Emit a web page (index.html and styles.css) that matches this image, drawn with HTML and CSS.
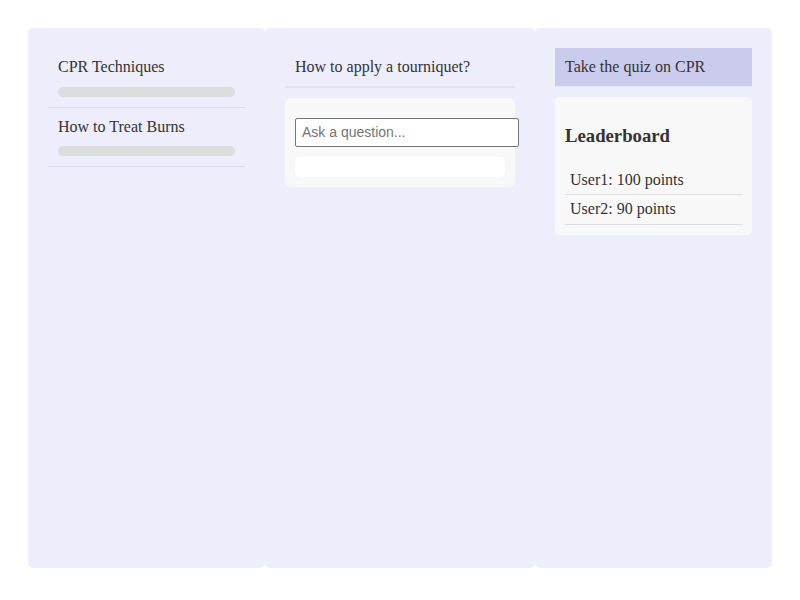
FILE: index.html
```html
<!DOCTYPE html>
<html>
<head>
<meta charset="utf-8">
<link rel="stylesheet" href="styles.css">
</head>
<body>
<div class="layout">
  <aside class="col col-side">
    <div class="topic">
      <div class="topic-title">CPR Techniques</div>
      <div class="bar"></div>
    </div>
    <div class="topic">
      <div class="topic-title">How to Treat Burns</div>
      <div class="bar"></div>
    </div>
  </aside>
  <main class="col col-main">
    <div class="question">How to apply a tourniquet?</div>
    <div class="card">
      <input class="ask" type="text" placeholder="Ask a question...">
      <div class="answers"></div>
    </div>
  </main>
  <aside class="col col-side">
    <div class="quiz">Take the quiz on CPR</div>
    <div class="card">
      <h3 class="lb-title">Leaderboard</h3>
      <div class="lb-row">User1: 100 points</div>
      <div class="lb-row">User2: 90 points</div>
    </div>
  </aside>
</div>
</body>
</html>
```

FILE: styles.css
```css
html, body {
  margin: 0;
  padding: 0;
  background: #ffffff;
}
body {
  font-family: "Liberation Serif", "Times New Roman", serif;
  font-size: 16px;
  color: #333333;
}
.layout {
  display: grid;
  grid-template-columns: 237px 270px 237px;
  padding: 28px;
  height: 540px;
}
.col {
  background: #eeedfc;
  border-radius: 5px;
  padding: 20px;
}
.topic {
  padding: 10px;
  border-bottom: 1px solid #dddde6;
}
.topic-title {
  line-height: 18.5px;
}
.bar {
  margin-top: 10px;
  height: 10px;
  border-radius: 5px;
  background: #dddddd;
}
.question {
  padding: 10px;
  line-height: 18.4px;
  border-bottom: 2px solid #e2e1f2;
}
.card {
  margin-top: 10px;
  background: #f8f8f8;
  border-radius: 5px;
  padding: 10px;
}
.ask {
  display: block;
  width: 100%;
  margin: 10px 0;
  padding: 6px;
  border: 1px solid #767676;
  border-radius: 2px;
  font-family: "Liberation Sans", Arial, sans-serif;
  font-size: 14px;
  line-height: 15px;
  color: #333;
  background: #fff;
}
.ask::placeholder {
  color: #757575;
}
.answers {
  height: 20px;
  background: #ffffff;
  border-radius: 5px;
}
.quiz {
  background: #cbcbed;
  padding: 10px;
  line-height: 18px;
  border-bottom: 1px solid #e4e4f6;
}
.lb-title {
  margin: 18px 0 18.72px;
  font-size: 18.72px;
  font-weight: bold;
}
.lb-row {
  padding: 5px;
  line-height: 18.4px;
  border-bottom: 1px solid #dddddd;
}
```
